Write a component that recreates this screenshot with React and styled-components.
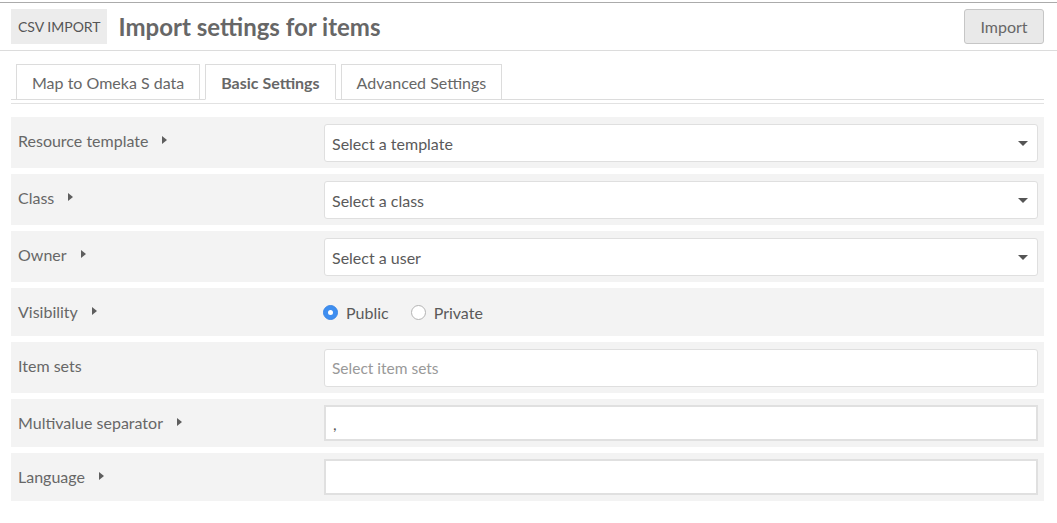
import React from "react";
import styled, { createGlobalStyle } from "styled-components";

const Global = createGlobalStyle`
  html, body { margin: 0; padding: 0; background: #fff; }
  body { font-family: Lato, "Open Sans", sans-serif; color: #676767; }
  * { box-sizing: border-box; }
`;

const Page = styled.div`
  padding-top: 2px;
`;

const Header = styled.header`
  display: flex;
  align-items: center;
  border-top: 1px solid #ababab;
  border-bottom: 1px solid #dcdcdc;
  padding: 6px 13px 6px 11px;
`;

const Badge = styled.span`
  display: flex;
  align-items: center;
  height: 35px;
  padding: 0 6px 0 7px;
  background: #ececec;
  color: #555;
  font-size: 14px;
  text-transform: uppercase;
`;

const Title = styled.h1`
  margin: 0 0 0 12px;
  font-size: 24px;
  font-weight: 700;
  color: #676767;
  flex: 1;
`;

const Button = styled.button`
  width: 80px;
  height: 35px;
  border: 1px solid #c6c6c6;
  border-radius: 3px;
  background: #e9e9e9;
  color: #676767;
  font-family: Lato, sans-serif;
  font-size: 16px;
  padding: 0;
`;

const Content = styled.div`
  padding: 0 13px 0 11px;
`;

const TabList = styled.ul`
  display: flex;
  gap: 5px;
  list-style: none;
  margin: 13px 0 0;
  padding: 0 0 0 5px;
  border-bottom: 1px solid #dcdcdc;
`;

const Tab = styled.li`
  height: 36px;
  display: flex;
  align-items: center;
  padding: 0 15px;
  border: 1px solid #dcdcdc;
  border-bottom-color: ${(p) => (p.$active ? "#fff" : "#dcdcdc")};
  margin-bottom: -1px;
  font-size: 16px;
  font-weight: ${(p) => (p.$active ? 700 : 400)};
  color: #676767;
  background: #fff;
`;

const Rule = styled.div`
  margin-top: 3px;
  border-top: 1px solid #e2e2e2;
`;

const Fields = styled.div`
  display: flex;
  flex-direction: column;
  gap: 6px;
  margin-top: 13px;
`;

const Row = styled.div`
  display: grid;
  grid-template-columns: 306px 1fr;
  align-items: start;
  background: #f3f3f3;
  padding: ${(p) => (p.$tall ? "7px 6px 6px 7px" : "6px 6px 6px 7px")};
`;

const Label = styled.div`
  display: flex;
  align-items: center;
  gap: 14px;
  height: 34px;
  margin-top: ${(p) => (p.$tall ? "-1px" : "0")};
  font-size: 16px;
  color: #676767;
`;

const Caret = styled.span`
  width: 0;
  height: 0;
  border-top: 4.5px solid transparent;
  border-bottom: 4.5px solid transparent;
  border-left: 5px solid #5e5e5e;
`;

const SelectBox = styled.div`
  position: relative;
  height: 38px;
  display: flex;
  align-items: center;
  padding-left: 7px;
  background: #fff;
  border: 1px solid #dfdfdf;
  border-radius: 3px;
  font-size: 16px;
  color: #5a5a5a;
`;

const DownCaret = styled.span`
  position: absolute;
  right: 9px;
  top: 50%;
  margin-top: -2px;
  width: 0;
  height: 0;
  border-left: 5px solid transparent;
  border-right: 5px solid transparent;
  border-top: 5px solid #555;
`;

const TextBox = styled.div`
  height: ${(p) => (p.$rounded ? "38px" : "36px")};
  display: flex;
  align-items: center;
  padding-left: 7px;
  background: #fff;
  border: ${(p) => (p.$rounded ? "1px solid #dfdfdf" : "2px solid #e0e0e0")};
  border-radius: ${(p) => (p.$rounded ? "3px" : "0")};
  font-size: ${(p) => (p.$placeholder ? "15.5px" : "16px")};
  color: ${(p) => (p.$placeholder ? "#999" : "#555")};
`;

const Radios = styled.div`
  display: flex;
  align-items: center;
  height: 36px;
  margin-left: -1px;
`;

const RadioItem = styled.label`
  display: flex;
  align-items: center;
  gap: 8px;
  margin-right: 22px;
  font-size: 16px;
  color: #5a5a5a;
`;

const RadioDot = styled.span`
  width: 15px;
  height: 15px;
  border-radius: 50%;
  display: flex;
  align-items: center;
  justify-content: center;
  background: ${(p) => (p.$on ? "#3e8ef0" : "#fff")};
  border: 1px solid ${(p) => (p.$on ? "#3a86e6" : "#b3b3b3")};
  &::after {
    content: "";
    display: ${(p) => (p.$on ? "block" : "none")};
    width: 5px;
    height: 5px;
    border-radius: 50%;
    background: #fff;
  }
`;

const rows = [
  { label: "Resource template", caret: true, kind: "select", value: "Select a template" },
  { label: "Class", caret: true, kind: "select", value: "Select a class" },
  { label: "Owner", caret: true, kind: "select", value: "Select a user" },
  { label: "Visibility", caret: true, kind: "radio" },
  { label: "Item sets", caret: false, kind: "placeholder", value: "Select item sets" },
  { label: "Multivalue separator", caret: true, kind: "text", value: "," },
  { label: "Language", caret: true, kind: "text", value: "" },
];

function Control({ row }) {
  if (row.kind === "select")
    return (
      <SelectBox>
        {row.value}
        <DownCaret />
      </SelectBox>
    );
  if (row.kind === "radio")
    return (
      <Radios>
        <RadioItem>
          <RadioDot $on />
          Public
        </RadioItem>
        <RadioItem>
          <RadioDot />
          Private
        </RadioItem>
      </Radios>
    );
  if (row.kind === "placeholder")
    return (
      <TextBox $rounded $placeholder>
        {row.value}
      </TextBox>
    );
  return <TextBox>{row.value}</TextBox>;
}

export default function App() {
  return (
    <Page>
      <Global />
      <Header>
        <Badge>CSV Import</Badge>
        <Title>Import settings for items</Title>
        <Button>Import</Button>
      </Header>
      <Content>
        <TabList>
          <Tab>Map to Omeka S data</Tab>
          <Tab $active>Basic Settings</Tab>
          <Tab>Advanced Settings</Tab>
        </TabList>
        <Rule />
        <Fields>
          {rows.map((r) => {
            const tall = r.kind === "select" || r.kind === "placeholder";
            return (
              <Row key={r.label} $tall={tall}>
                <Label $tall={tall}>
                  {r.label}
                  {r.caret && <Caret />}
                </Label>
                <Control row={r} />
              </Row>
            );
          })}
        </Fields>
      </Content>
    </Page>
  );
}
